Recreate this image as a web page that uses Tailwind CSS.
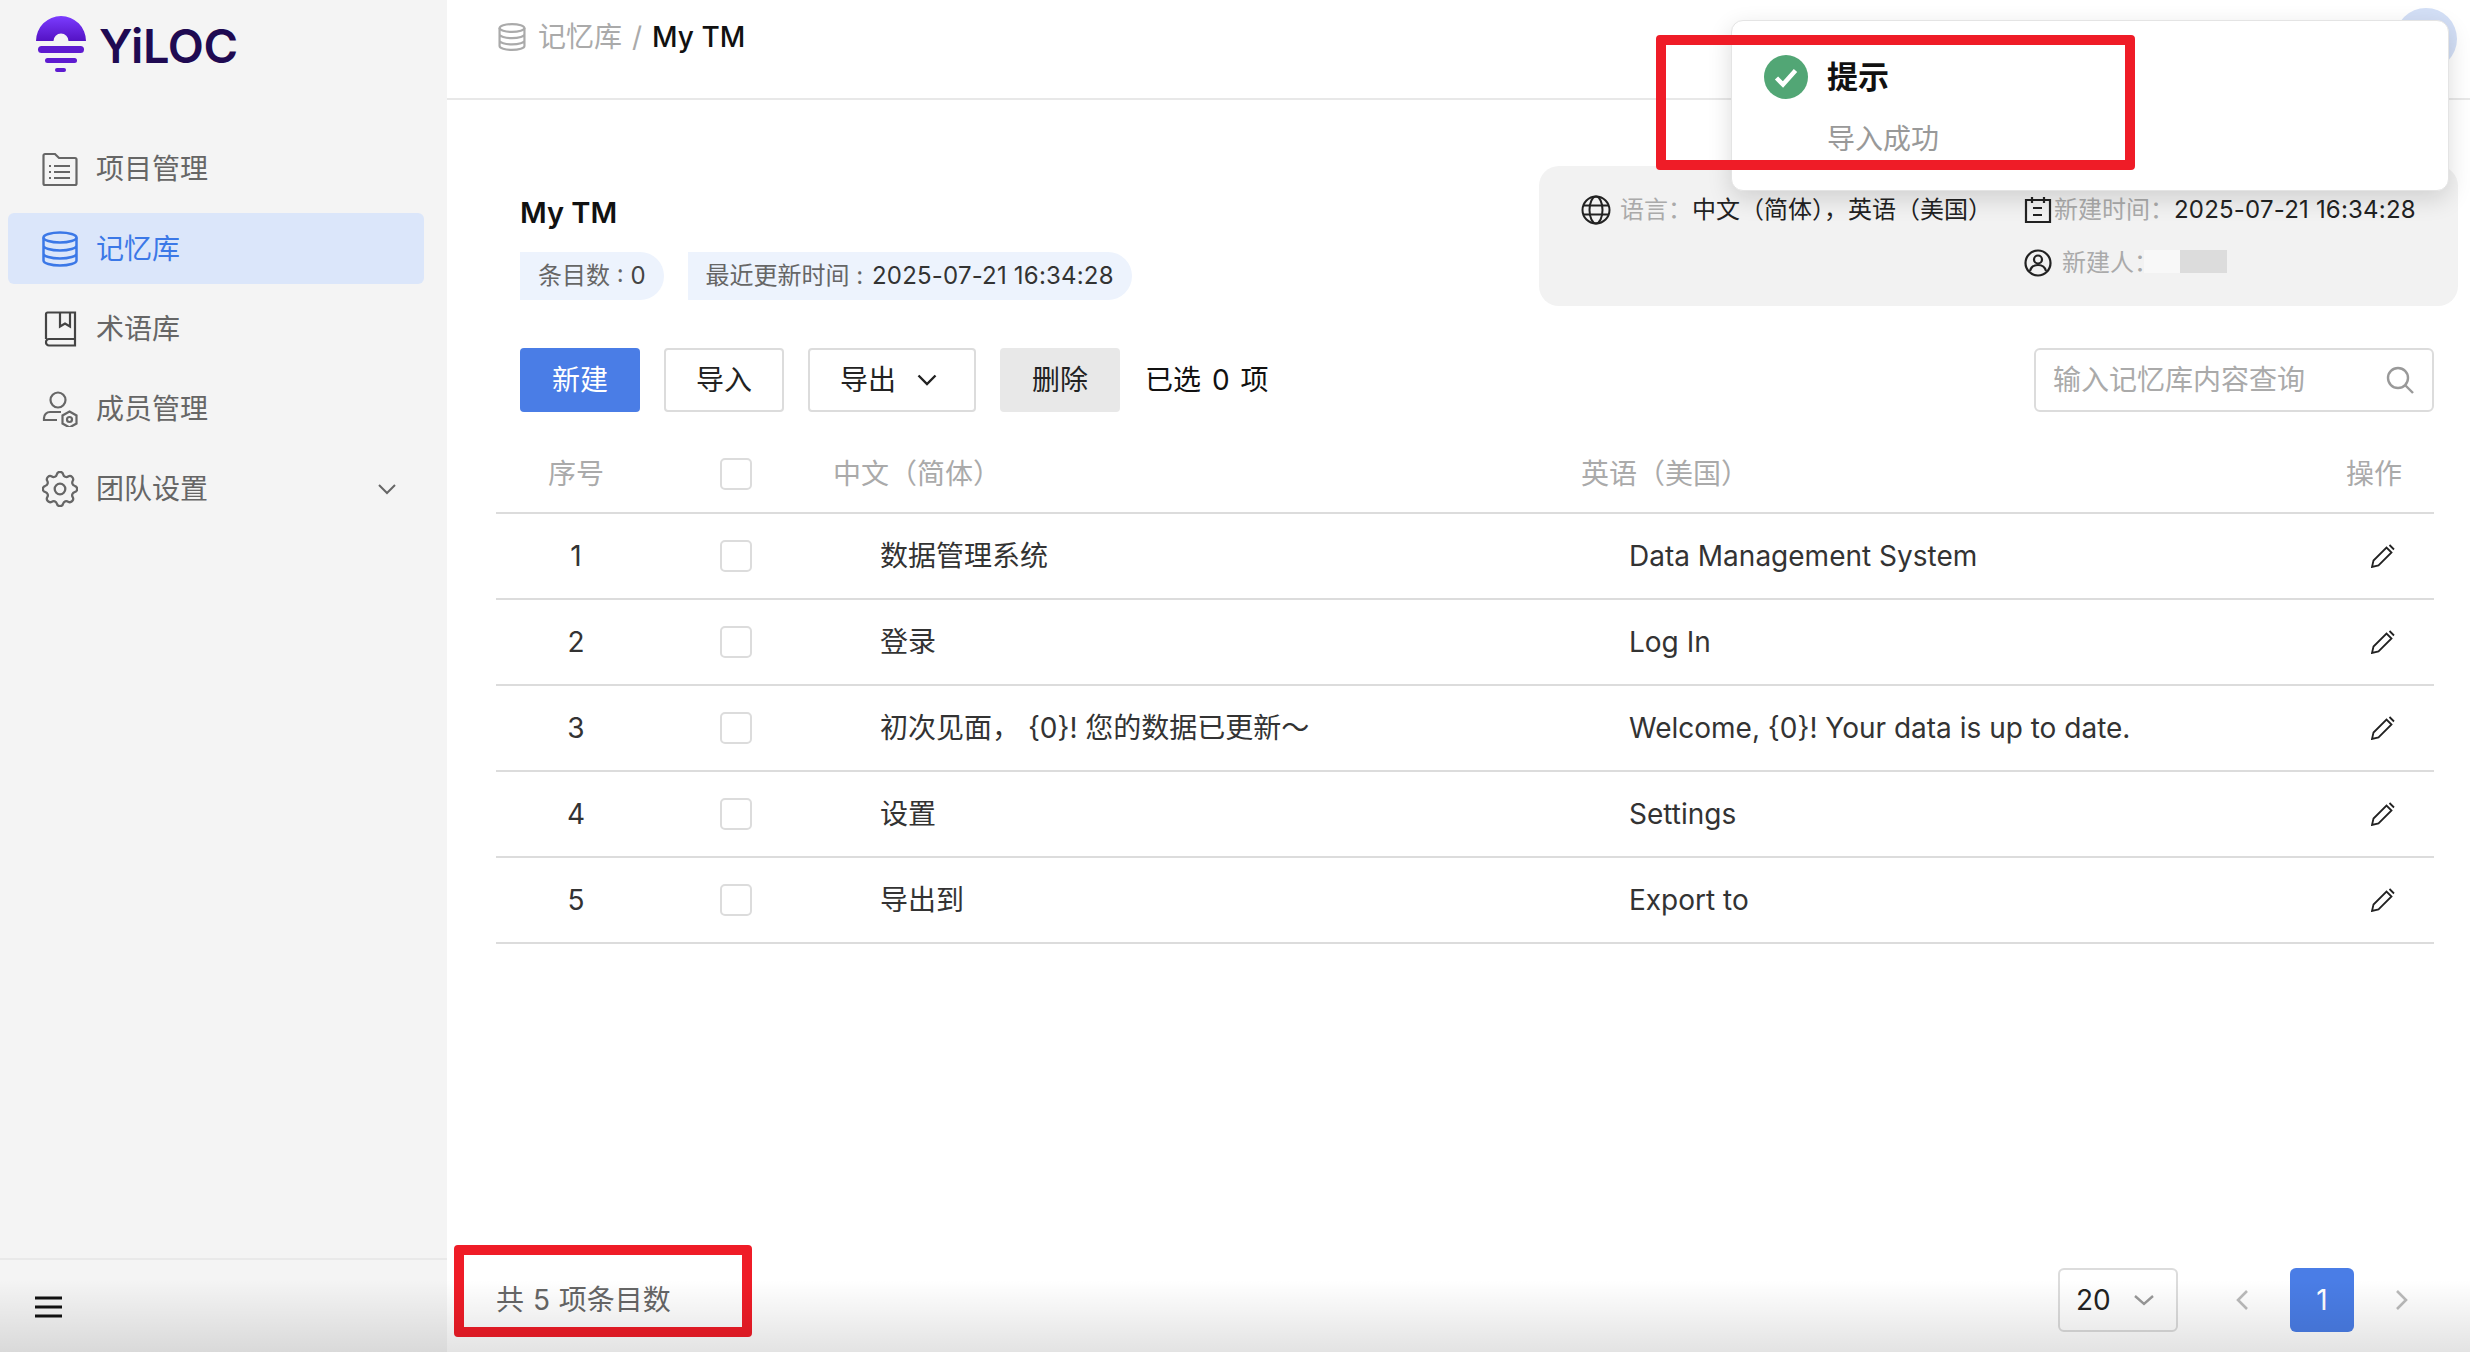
<!DOCTYPE html>
<html lang="zh-CN">
<head>
    <meta charset="UTF-8">
    <title>YiLOC 记忆库</title>
    <script src="https://cdn.jsdelivr.net/npm/@tailwindcss/browser@4"></script>
</head>
<body class="bg-white font-['Inter','Noto_Sans_CJK_SC',sans-serif] text-[28px] text-[#333]">
    <div class="relative flex h-[1352px] w-[2470px] overflow-hidden">
        <!-- sidebar -->
        <aside class="flex w-[447px] flex-col bg-[#f4f4f4]">
            <div class="h-[133px] pl-[36px] pt-[16px]">
                <div class="flex h-[56px] items-center gap-[13px]">
                    <svg class="h-[56px] w-[50px]" viewBox="36 16 50 56">
                        <defs>
                            <linearGradient id="logoFill" x1="0" y1="0" x2="0" y2="1">
                                <stop offset="0" stop-color="#7b3cff"/>
                                <stop offset="1" stop-color="#5412c4"/>
                            </linearGradient>
                        </defs>
                        <path fill="url(#logoFill)" d="M36 41A25 25 0 0 1 86 41H68.5A7.5 7.5 0 0 0 53.5 41Z"/>
                        <rect x="38" y="46" width="46" height="7" rx="3.5" fill="#5e1bd0"/>
                        <rect x="45" y="58" width="32" height="5" rx="2.5" fill="#5e1bd0"/>
                        <rect x="55" y="68" width="11" height="4" rx="2" fill="#5e1bd0"/>
                    </svg>
                    <span class="pt-[3px] text-[47px] leading-none font-semibold tracking-[-0.4px] text-[#1f0a52]">YiLOC</span>
                </div>
            </div>
            <nav class="ml-[8px] flex w-[416px] flex-col gap-[9px] text-[#666]">
                <a class="flex h-[71px] items-center gap-[18px] pl-[34px]">
                    <svg class="h-[36px] w-[36px]" viewBox="0 0 36 36" fill="none" stroke="#666" stroke-width="2.2">
                        <path d="M1.5 4.5A1.5 1.5 0 0 1 3 3h10l4 4h16a1.5 1.5 0 0 1 1.5 1.5v24A1.5 1.5 0 0 1 33 34H3a1.5 1.5 0 0 1-1.5-1.500z"/>
                        <path d="M12 15h16M12 21h16M12 27h16M7 15h2M7 21h2M7 27h2"/>
                    </svg>
                    <span>项目管理</span>
                </a>
                <a class="flex h-[71px] items-center gap-[18px] rounded-[6px] bg-[#dbe6fa] pl-[34px] text-[#3b78e7]">
                    <svg class="h-[36px] w-[36px]" viewBox="0 0 36 36" fill="none" stroke="#3b78e7" stroke-width="2.5">
                        <ellipse cx="18" cy="6.5" rx="16.5" ry="5"/>
                        <path d="M1.5 6.5v23c0 2.8 7.4 5 16.5 5s16.5-2.2 16.5-5v-23M1.5 14.5c0 2.8 7.4 5 16.5 5s16.5-2.2 16.5-5M1.5 22.5c0 2.8 7.4 5 16.5 5s16.5-2.2 16.5-5"/>
                    </svg>
                    <span>记忆库</span>
                </a>
                <a class="flex h-[71px] items-center gap-[18px] pl-[34px]">
                    <svg class="h-[36px] w-[36px]" viewBox="0 0 36 36" fill="none" stroke="#444" stroke-width="2.2">
                        <path d="M4 28V3a1.5 1.5 0 0 1 1.5-1.5H33v33H7a3 3 0 0 1-3-3.200A3 3 0 0 1 7 28h26"/>
                        <path d="M18 1.5v14l5-3 5 3v-14"/>
                    </svg>
                    <span>术语库</span>
                </a>
                <a class="flex h-[71px] items-center gap-[18px] pl-[34px]">
                    <svg class="h-[36px] w-[36px]" viewBox="0 0 36 36" fill="none" stroke="#666" stroke-width="2.2">
                        <circle cx="16" cy="9" r="7.5"/>
                        <path d="M19 21H8a6 6 0 0 0-6 6v2h13"/>
                        <path d="M27.5 20.5l7 4v8l-7 4-7-4v-8z"/>
                        <circle cx="27.5" cy="28.5" r="2.5"/>
                    </svg>
                    <span>成员管理</span>
                </a>
                <a class="flex h-[71px] items-center gap-[18px] pl-[34px]">
                    <svg class="h-[36px] w-[36px]" viewBox="2.5 2.5 19 19" fill="none" stroke="#666" stroke-width="1.2">
                        <path d="M10.3 4.3c.4-1.8 3-1.800 3.400 0a1.700 1.700 0 0 0 2.600 1.100c1.500-.9 3.300.8 2.400 2.400a1.700 1.700 0 0 0 1 2.500c1.800.4 1.800 3 0 3.400a1.700 1.700 0 0 0-1 2.600c.9 1.500-.9 3.300-2.400 2.400a1.700 1.700 0 0 0-2.600 1c-.4 1.800-3 1.800-3.400 0a1.700 1.700 0 0 0-2.600-1c-1.500.9-3.300-.9-2.400-2.400a1.700 1.700 0 0 0-1-2.600c-1.800-.4-1.800-3 0-3.400a1.700 1.700 0 0 0 1-2.500c-.9-1.600.9-3.300 2.400-2.400a1.700 1.700 0 0 0 2.600-1.100z"/>
                        <circle cx="12" cy="12" r="2.800"/>
                    </svg>
                    <span>团队设置</span>
                    <svg class="ml-[151px] h-[20px] w-[20px]" viewBox="0 0 20 20" fill="none" stroke="#666" stroke-width="2"><path d="M2 6l8 8 8-8"/></svg>
                </a>
            </nav>
            <div class="mt-auto flex h-[94px] items-center border-t-2 border-[#e9e9e9] pl-[35px] pt-[2px]">
                <svg class="h-[24px] w-[27px]" viewBox="0 0 27 24" stroke="#111" stroke-width="3"><path d="M0 3h27M0 12h27M0 21h27"/></svg>
            </div>
        </aside>

        <main class="flex min-w-0 flex-1 flex-col">
            <header class="flex h-[100px] items-start gap-[12px] border-b-2 border-[#e8e8e8] pl-[51px] pt-[20px]">
                <svg class="mt-[3px] h-[28px] w-[28px]" viewBox="0 0 36 36" fill="none" stroke="#aaa" stroke-width="2.8">
                    <ellipse cx="18" cy="6.5" rx="16" ry="5"/>
                    <path d="M2 6.5v23c0 2.8 7.2 5 16 5s16-2.200 16-5v-23M2 14.500c0 2.800 7.200 5 16 5s16-2.200 16-5M2 22.500c0 2.800 7.200 5 16 5s16-2.200 16-5"/>
                </svg>
                <span class="leading-[34px] text-[#aaa]">记忆库<span class="mx-[10px]">/</span><span class="font-medium text-[#111]">My TM</span></span>
            </header>

            <section class="flex h-[248px] justify-between pr-[12px] pt-[66px]">
                <div class="pl-[73px] pt-[31px]">
                    <h1 class="text-[29px] leading-[32px] font-semibold text-[#111]">My TM</h1>
                    <div class="mt-[23px] flex gap-[24px] text-[24px] leading-[48px] text-[#666]">
                        <span class="rounded-r-full bg-[#edf3fd] px-[18px]">条目数 : <span class="text-[#444]">0</span></span>
                        <span class="rounded-r-full bg-[#edf3fd] px-[18px]">最近更新时间 : <span class="ml-[2px] tracking-[0.2px] text-[#333]">2025-07-21 16:34:28</span></span>
                    </div>
                </div>
                <div class="flex h-[140px] w-[919px] rounded-[20px] bg-[#f2f2f2] pl-[42px] pt-[27px] text-[24px] leading-[34px]">
                    <div class="flex h-[34px] w-[443px] items-center gap-[9px]">
                        <svg class="h-[30px] w-[30px]" viewBox="0 0 30 30" fill="none" stroke="#222" stroke-width="2"><circle cx="15" cy="15" r="13.5"/><ellipse cx="15" cy="15" rx="6.5" ry="13.5"/><path d="M2 10.5h26M2 19.5h26"/></svg>
                        <span class="text-[#aaa]">语言：<span class="text-[#222]">中文（简体），英语（美国）</span></span>
                    </div>
                    <div class="flex flex-col gap-[19px]">
                        <div class="flex h-[34px] items-center gap-[2px]">
                            <svg class="h-[28px] w-[28px]" viewBox="0 0 28 28" fill="none" stroke="#222" stroke-width="2.2"><path d="M2 4h24v22H2zM8 1v6M20 1v6M9 12h9M9 19h9"/></svg>
                            <span class="text-[#aaa]">新建时间：<span class="tracking-[0.2px] text-[#222]">2025-07-21 16:34:28</span></span>
                        </div>
                        <div class="flex h-[34px] items-center gap-[10px]">
                            <svg class="h-[28px] w-[28px]" viewBox="0 0 28 28" fill="none" stroke="#222" stroke-width="2.2"><circle cx="14" cy="14" r="12.5"/><circle cx="14" cy="10.5" r="4"/><path d="M6 22c1-4 4-6 8-6s7 2 8 6"/></svg>
                            <span class="text-[#aaa]">新建人：</span>
                            <span class="mb-[4px] ml-[-24px] h-[23px] w-[36px] bg-[#f8f8f8]"></span>
                            <span class="mb-[4px] ml-[-10px] h-[23px] w-[47px] bg-[#dcdcdc]"></span>
                        </div>
                    </div>
                </div>
            </section>

            <div class="flex h-[64px] items-center pl-[73px] pr-[36px]">
                <button class="h-[64px] w-[120px] rounded-[4px] bg-[#4a7de6] text-white">新建</button>
                <button class="ml-[24px] h-[64px] w-[120px] rounded-[4px] border-2 border-[#dcdcdc] bg-white text-[#222]">导入</button>
                <button class="ml-[24px] flex h-[64px] w-[168px] items-center gap-[21px] rounded-[4px] border-2 border-[#dcdcdc] bg-white pl-[30px] text-[#222]">
                    导出
                    <svg class="h-[20px] w-[20px]" viewBox="0 0 20 20" fill="none" stroke="#222" stroke-width="2.4"><path d="M1.5 5.5l8.5 8.500 8.500-8.500"/></svg>
                </button>
                <button class="ml-[24px] h-[64px] w-[120px] rounded-[4px] bg-[#e8e8e8] text-[#222]">删除</button>
                <span class="ml-[25px] text-[#111] [word-spacing:3px]">已选 0 项</span>
                <div class="ml-auto flex h-[64px] w-[400px] items-center justify-between rounded-[6px] border-2 border-[#dcdcdc] pl-[17px] pr-[18px] text-[#aaa]">
                    <span>输入记忆库内容查询</span>
                    <svg class="h-[28px] w-[28px]" viewBox="0 0 28 28" fill="none" stroke="#999" stroke-width="2.4"><circle cx="12" cy="12" r="10"/><path d="M19 19l8 8"/></svg>
                </div>
            </div>

            <!-- table -->
            <div class="ml-[49px] mr-[36px] mt-[23px]">
                <div class="grid h-[79px] grid-cols-[158px_164px_748px_1fr_134px] items-center border-b-2 border-[#dcdcdc] text-[#aaa]">
                    <span class="pl-[2px] text-center">序号</span>
                    <span class="flex justify-center"><span class="h-[32px] w-[32px] rounded-[5px] border-2 border-[#dcdcdc] bg-white"></span></span>
                    <span class="pl-[15px]">中文（简体）</span>
                    <span class="pl-[15px]">英语（美国）</span>
                    <span class="pl-[46px]">操作</span>
                </div>
                <div id="rows"></div>
            </div>

            <div class="mb-[20px] mt-auto flex h-[64px] items-center pl-[49px] pr-[36px]">
                <span class="text-[#666] [word-spacing:1px]">共 5 项条目数</span>
                <div class="ml-auto flex h-[64px] w-[120px] items-center justify-between rounded-[6px] border-2 border-[#dcdcdc] pl-[16px] pr-[22px] text-[#222]">
                    <span>20</span>
                    <svg class="h-[20px] w-[20px]" viewBox="0 0 20 20" fill="none" stroke="#999" stroke-width="2.4"><path d="M1 6l9 8 9-8"/></svg>
                </div>
                <div class="ml-[32px] flex h-[64px] w-[64px] items-center justify-center">
                    <svg class="h-[20px] w-[14px]" viewBox="0 0 14 20" fill="none" stroke="#bbb" stroke-width="2.6"><path d="M12 1l-9 9 9 9"/></svg>
                </div>
                <div class="ml-[16px] flex h-[64px] w-[64px] items-center justify-center rounded-[6px] bg-[#4a7de6] text-white">1</div>
                <div class="ml-[16px] flex h-[64px] w-[64px] items-center justify-center">
                    <svg class="h-[20px] w-[14px]" viewBox="0 0 14 20" fill="none" stroke="#bbb" stroke-width="2.6"><path d="M2 1l9 9-9 9"/></svg>
                </div>
            </div>
        </main>

        <!-- avatar behind the toast -->
        <div class="absolute left-[2395px] top-[8px] h-[62px] w-[62px] rounded-full bg-[#d3dff6]"></div>

        <!-- toast -->
        <div class="absolute left-[1731px] top-[20px] h-[171px] w-[718px] rounded-[12px] border border-[#e4e4e4] bg-white shadow-[0_8px_24px_rgba(0,0,0,0.14)]">
            <div class="absolute left-[32px] top-[33px] flex items-center gap-[19px]">
                <svg class="h-[44px] w-[44px]" viewBox="0 0 44 44"><circle cx="22" cy="22" r="22" fill="#52a675"/><path d="M12.5 23l6.500 6.500 12.500-14" fill="none" stroke="#fff" stroke-width="4.5"/></svg>
                <span class="text-[31px] font-bold text-[#111]">提示</span>
            </div>
            <span class="absolute left-[95px] top-[97px] text-[#999]">导入成功</span>
        </div>

        <!-- red annotation boxes -->
        <div class="pointer-events-none absolute left-[1656px] top-[35px] h-[135px] w-[479px] rounded-[4px] border-[10px] border-[#ef1c27]"></div>
        <div class="pointer-events-none absolute left-[454px] top-[1245px] h-[92px] w-[298px] rounded-[4px] border-[10px] border-[#ef1c27]"></div>

        <!-- fade along the bottom of the page -->
        <div class="pointer-events-none absolute bottom-0 left-0 h-[72px] w-full bg-linear-to-b from-transparent to-black/11"></div>
    </div>
    <script>
        const rows = [
            ['1', '数据管理系统', 'Data Management System'],
            ['2', '登录', 'Log In'],
            ['3', '初次见面， {0}! 您的数据已更新～', 'Welcome, {0}! Your data is up to date.'],
            ['4', '设置', 'Settings'],
            ['5', '导出到', 'Export to']
        ];
        const pencil = '<svg class="h-[24px] w-[24px]" viewBox="0 0 24 24" fill="none" stroke="#222" stroke-width="1.8"><path d="M1 23l1.500-6.500L15.500 3.500l5 5L7.500 21.500zM18.500 1l4.500 4.500"/></svg>';
        document.getElementById('rows').innerHTML = rows.map(r => `
            <div class="grid h-[86px] grid-cols-[158px_164px_748px_1fr_134px] items-center border-b-2 border-[#dcdcdc]">
                <span class="pl-[2px] text-center">${r[0]}</span>
                <span class="flex justify-center"><span class="h-[32px] w-[32px] rounded-[5px] border-2 border-[#dcdcdc] bg-white"></span></span>
                <span class="pl-[62px]">${r[1]}</span>
                <span class="pl-[63px]">${r[2]}</span>
                <span class="pl-[71px]">${pencil}</span>
            </div>`).join('');
    </script>
</body>
</html>
